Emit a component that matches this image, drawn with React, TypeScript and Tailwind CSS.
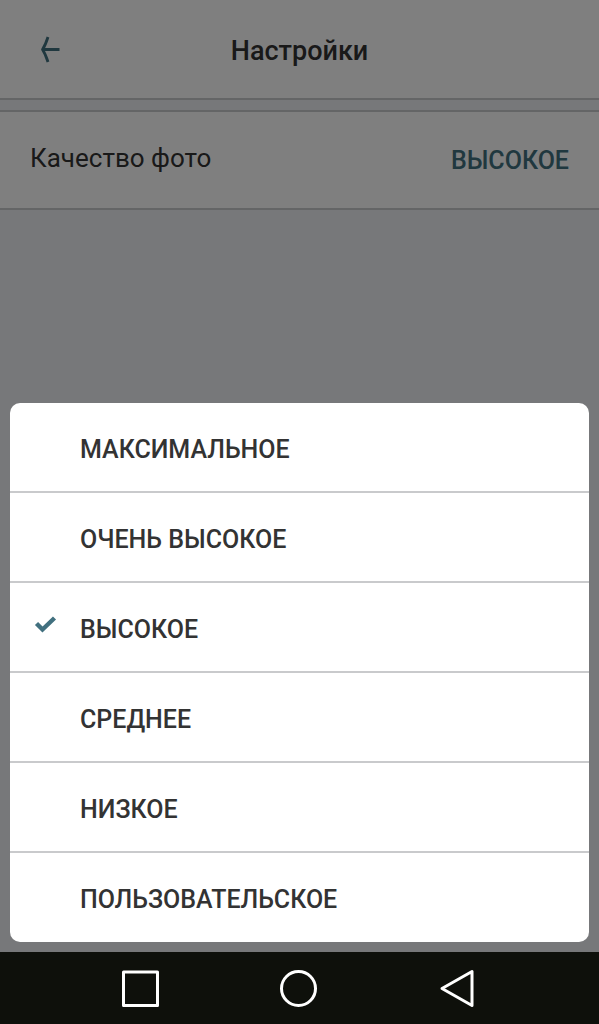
import { useState } from "react";

const options = [
  "МАКСИМАЛЬНОЕ",
  "ОЧЕНЬ ВЫСОКОЕ",
  "ВЫСОКОЕ",
  "СРЕДНЕЕ",
  "НИЗКОЕ",
  "ПОЛЬЗОВАТЕЛЬСКОЕ",
];

function Header() {
  return (
    <header className="grid h-[100px] grid-cols-[1fr_auto_1fr] items-center border-b-2 border-[#c9cacc] bg-white px-[30px]">
      <button type="button" aria-label="Назад" className="flex size-10 items-center justify-center">
        <svg width="40" height="40" viewBox="0 0 40 40" fill="none" stroke="#41707f" strokeWidth="2.8">
          <path d="M29.5 20.5H13M18 8Q15.5 16 12.5 20.5Q15.5 25 18 33" strokeLinejoin="round" />
        </svg>
      </button>
      <h1 className="pt-1 text-[27px] leading-8 font-medium text-[#333]">Настройки</h1>
    </header>
  );
}

function NavigationBar() {
  return (
    <nav className="flex h-[72px] items-center justify-around bg-[#0e100b] px-[60px]">
      <button type="button" aria-label="Недавние приложения">
        <svg width="40" height="40" viewBox="0 0 40 40" fill="none" stroke="white" strokeWidth="3">
          <path d="M3.5 4H37.5V37.5H3.5Z" strokeLinejoin="round" />
        </svg>
      </button>
      <button type="button" aria-label="Домой">
        <svg width="40" height="40" viewBox="0 0 40 40" fill="none" stroke="white" strokeWidth="3">
          <circle cx="19.5" cy="20.5" r="17" />
        </svg>
      </button>
      <button type="button" aria-label="Назад">
        <svg width="40" height="40" viewBox="0 0 40 40" fill="none" stroke="white" strokeWidth="3">
          <path d="M33 3.5V37.5L3 20.5Z" strokeLinejoin="round" />
        </svg>
      </button>
    </nav>
  );
}

export default function App() {
  const [quality, setQuality] = useState("ВЫСОКОЕ");

  return (
    <div className="flex min-h-screen flex-col font-['Roboto',sans-serif]">
      <div className="relative flex flex-1 flex-col bg-[#eef0f4]">
        <Header />
        <main className="pt-2.5">
          <button
            type="button"
            className="flex h-[100px] w-full items-center justify-between border-y-2 border-[#c9cacc] bg-white px-[30px] leading-8"
          >
            <span className="pb-1 text-[26px] text-[#333]">Качество фото</span>
            <span className="pt-0.5 text-[25px] font-medium text-[#41707f]">{quality}</span>
          </button>
        </main>
        <div className="absolute inset-0 flex items-end bg-black/50 p-2.5">
          <div role="dialog" aria-label="Качество фото" className="w-full overflow-hidden rounded-[10px] bg-white pb-px">
            <ul className="divide-y-2 divide-[#c9cacc]">
              {options.map((option) => (
                <li key={option}>
                  <button
                    type="button"
                    aria-pressed={option === quality}
                    onClick={() => setQuality(option)}
                    className="flex h-[88px] w-full items-center text-[25px] leading-8 font-medium text-[#333]"
                  >
                    <span className="flex w-[70px] justify-center">
                      {option === quality && (
                        <svg width="24" height="32" viewBox="0 0 24 32" fill="none" stroke="#41707f" strokeWidth="4.4">
                          <path d="M3.5 12.5L9.5 18.5L21.5 7" />
                        </svg>
                      )}
                    </span>
                    <span className="pt-1.5">{option}</span>
                  </button>
                </li>
              ))}
            </ul>
          </div>
        </div>
      </div>
      <NavigationBar />
    </div>
  );
}
